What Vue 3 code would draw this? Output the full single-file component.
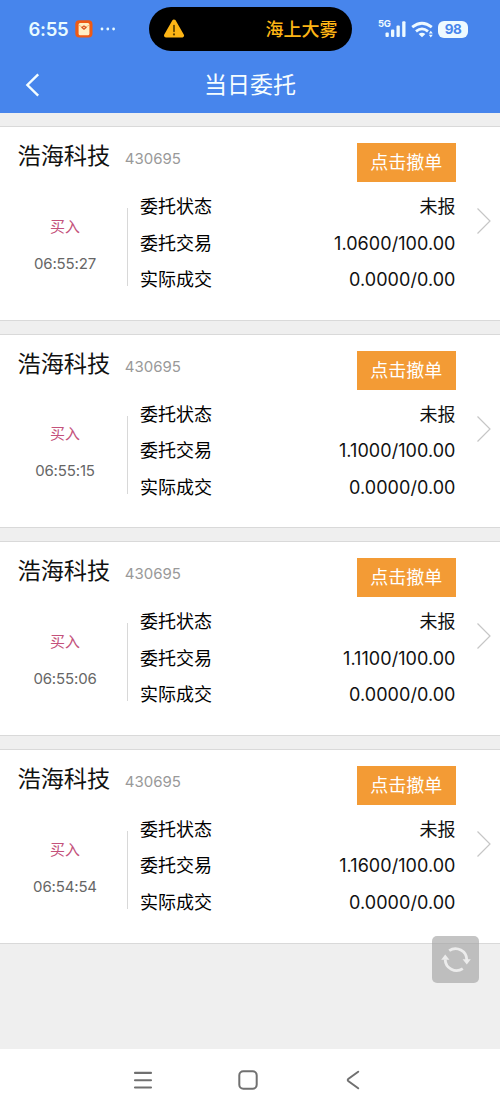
<script setup>
const orders = [
  { time: '06:55:27', price: '1.0600/100.00' },
  { time: '06:55:15', price: '1.1000/100.00' },
  { time: '06:55:06', price: '1.1100/100.00' },
  { time: '06:54:54', price: '1.1600/100.00' },
]
</script>

<template>
  <div class="screen">
    <header class="header">
      <div class="status">
        <span class="clock">6:55</span>
        <svg class="app-icon" width="18" height="18" viewBox="0 0 18 18">
          <rect x="0.3" y="0.3" width="17.2" height="17.2" rx="4" fill="#ee5a14" />
          <rect x="3.6" y="3" width="10.8" height="12.2" rx="1.5" fill="#ffefc4" />
          <path d="M3.8 5.2 L9 8 L14.2 5.2" fill="none" stroke="#eeb070" stroke-width="0.9" />
          <path d="M6 7.4 L9 5.2 L12 7.4 L9 10 Z" fill="#d9501c" />
          <circle cx="9" cy="7.5" r="0.8" fill="#ffe9bd" />
        </svg>
        <svg class="dots" width="16" height="4" viewBox="0 0 16 4" fill="#e8fbff">
          <circle cx="2" cy="2" r="1.4" /><circle cx="7.8" cy="2" r="1.4" /><circle cx="13.6" cy="2" r="1.4" />
        </svg>
        <div class="island">
          <svg width="22" height="20" viewBox="0 0 22 20">
            <path d="M11 2.5 L19 16.5 H3 Z" fill="#fdb515" stroke="#fdb515" stroke-width="4" stroke-linejoin="round" />
            <path d="M11 6.5 V12.3" stroke="#5e4200" stroke-width="1.7" stroke-linecap="round" />
            <circle cx="11" cy="15.4" r="1.1" fill="#5e4200" />
          </svg>
          <span>海上大雾</span>
        </div>
        <svg class="signals" width="56" height="22" viewBox="0 0 56 22" fill="#eefaff">
          <text x="0" y="8.5" class="net">5G</text>
          <rect x="7.5" y="14.5" width="3.3" height="4.5" rx="1" />
          <rect x="13" y="11.5" width="3.3" height="7.5" rx="1" />
          <rect x="18.5" y="7.5" width="3.3" height="11.5" rx="1" />
          <rect x="24.2" y="3.3" width="3.3" height="15.7" rx="1" />
          <g fill="none" stroke="#eefaff" stroke-width="2.8">
            <path d="M34.2 9.2 Q44 1.2 53.8 9.2" />
            <path d="M38 13.4 Q44 8.4 50 13.4" />
          </g>
          <path d="M40.6 16 Q44 13.6 47.4 16 L44 19.2 Z" />
          <path d="M50.8 15.4 L52.8 12.8 L54.8 15.4 Z M50.8 16.8 L52.8 19.4 L54.8 16.8 Z" />
        </svg>
        <div class="battery"><span>98</span></div>
      </div>
      <div class="titlebar">
        <svg class="back" width="16" height="24" viewBox="0 0 16 24">
          <path d="M14.2 1.4 L3.4 12 L14.2 22.6" fill="none" stroke="#f4fdff" stroke-width="2.4" />
        </svg>
        <h1>当日委托</h1>
      </div>
    </header>

    <main class="list">
      <article v-for="o in orders" :key="o.time" class="card">
        <div class="top">
          <div class="name">浩海科技</div>
          <div class="code">430695</div>
          <button class="cancel">点击撤单</button>
        </div>
        <div class="body">
          <div class="side">
            <div class="buy">买入</div>
            <div class="time">{{ o.time }}</div>
          </div>
          <dl class="rows">
            <div><dt>委托状态</dt><dd>未报</dd></div>
            <div><dt>委托交易</dt><dd>{{ o.price }}</dd></div>
            <div><dt>实际成交</dt><dd>0.0000/0.00</dd></div>
          </dl>
          <svg class="chevron" width="16" height="28" viewBox="0 0 16 28">
            <path d="M1.5 1.5 L14 14 L1.5 26.5" fill="none" stroke="#c6c6c6" stroke-width="1.2" />
          </svg>
        </div>
      </article>
    </main>

    <button class="refresh">
      <svg width="30" height="28" viewBox="0 0 30 28">
        <g fill="none" stroke="#ececec" stroke-width="2.8">
          <path d="M8.2 4.6 A11.3 11.3 0 0 1 25.8 14" />
          <path d="M21.8 22.6 A11.3 11.3 0 0 1 4.2 13.5" />
        </g>
        <path d="M21.6 13.3 H29.8 L25.8 18.6 Z M0.2 13.7 H8.4 L4.2 8.4 Z" fill="#ececec" />
      </svg>
    </button>

    <nav class="nav">
      <svg width="20" height="20" viewBox="0 0 20 20">
        <path d="M2 2.9 H18 M2 10.2 H18 M2 17.5 H18" stroke="#707070" stroke-width="2.1" stroke-linecap="round" />
      </svg>
      <svg width="20" height="20" viewBox="0 0 20 20">
        <rect x="1.3" y="1.3" width="17.4" height="17.4" rx="4" fill="none" stroke="#707070" stroke-width="2" />
      </svg>
      <svg width="20" height="20" viewBox="0 0 20 20">
        <path d="M15.2 1.7 L5.2 9 Q4.2 10 5.2 11 L15.2 18.3" fill="none" stroke="#707070" stroke-width="2" stroke-linecap="round" />
      </svg>
    </nav>
  </div>
</template>

<style>
body { margin: 0; }
</style>

<style scoped>
* { box-sizing: border-box; }
.screen {
  position: relative;
  width: 500px;
  height: 1111px;
  display: flex;
  flex-direction: column;
  overflow: hidden;
  background: #efefef;
  color: #111;
  font-family: Inter, "Noto Sans CJK SC", sans-serif;
}
.header { height: 113px; flex: none; background: #4785ec; }
.status { height: 58px; display: flex; align-items: center; padding-left: 28.5px; }
.clock { width: 45.5px; font-size: 18.5px; font-weight: 600; letter-spacing: -0.3px; color: #e8fbff; line-height: 24px; white-space: nowrap; }
.app-icon { margin-left: 1px; }
.dots { margin-left: 7px; }
.island {
  width: 203px;
  height: 44px;
  margin-left: 32.5px;
  border-radius: 22px;
  background: #000;
  display: flex;
  align-items: center;
  justify-content: space-between;
  padding: 0 14px;
  font-size: 18px;
  font-weight: 500;
  color: #fdb515;
}
.island span { line-height: 24px; padding-top: 1px; }
.signals { margin-left: 26.5px; flex: none; }
.net { font: 700 9.5px Inter, sans-serif; letter-spacing: -0.3px; }
.battery {
  margin-left: 4px;
  width: 30px;
  height: 17px;
  border-radius: 6px;
  background: #eefaff;
  color: #4785ec;
  font-size: 13.5px;
  font-weight: 700;
  letter-spacing: -0.5px;
  line-height: 17px;
  text-align: center;
}
.titlebar { height: 54px; display: flex; align-items: center; padding-left: 24px; }
.titlebar h1 { margin: 0 0 0 164px; font-size: 23px; font-weight: 400; line-height: 30px; color: #f6fdff; }
.list { padding-top: 13px; display: flex; flex-direction: column; gap: 13px; }
.card {
  height: 194.67px;
  background: #fff;
  border-top: 1px solid #d9d9d9;
  border-bottom: 1px solid #d9d9d9;
}
.top { height: 61px; display: flex; padding: 16px 44.5px 0 17.5px; }
.name { font-size: 23.2px; line-height: 28px; white-space: nowrap; margin-top: -1px; }
.code { margin-left: 14.5px; margin-top: 6px; font-size: 15px; line-height: 20px; color: #999; }
.cancel {
  margin-left: auto;
  width: 98.5px;
  height: 39px;
  padding: 0;
  border: 0;
  background: #f39b35;
  color: #fff;
  font: inherit;
  font-size: 18px;
  line-height: 39px;
}
.body { display: flex; }
.side { width: 127px; height: 100px; text-align: center; font-size: 15px; line-height: 20px; padding-top: 28.6px; }
.buy { color: #c4527b; padding-left: 3px; }
.time { margin-top: 17px; padding-left: 3px; color: #666; letter-spacing: -0.15px; }
.rows {
  margin: 0;
  width: 328.5px;
  padding: 1px 0 0 13px;
  background: linear-gradient(#d8d8d8, #d8d8d8) 0 20px / 1px 78px no-repeat;
  font-size: 18px;
}
.rows div { height: 36.5px; line-height: 36.5px; display: flex; justify-content: space-between; }
.rows dt { color: #000; }
.rows dd { margin: 0; letter-spacing: 0.05px; }
.chevron { margin: 19px 0 0 20.5px; }
.refresh {
  position: absolute;
  left: 432px;
  top: 936px;
  width: 47px;
  height: 47px;
  padding: 0;
  border: 0;
  border-radius: 5px;
  background: rgba(160, 160, 160, 0.62);
  display: grid;
  place-items: center;
}
.nav {
  margin-top: auto;
  height: 62px;
  flex: none;
  background: #fff;
  display: flex;
  justify-content: space-between;
  align-items: center;
  padding: 0 137px 0 133px;
}
</style>
